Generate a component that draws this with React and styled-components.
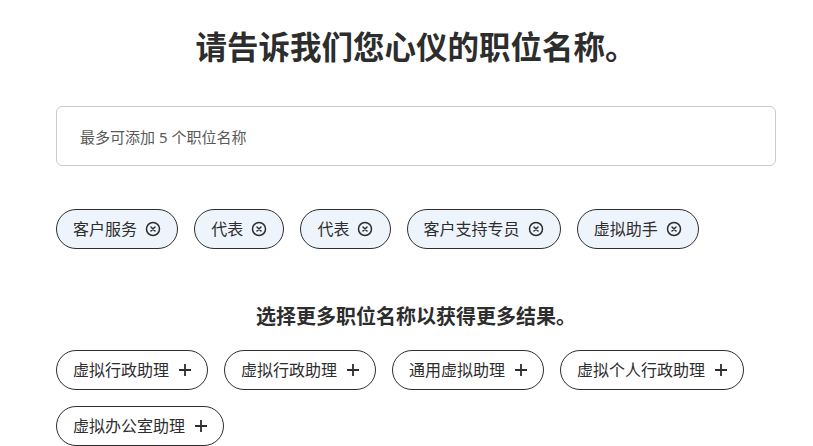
import React from 'react';
import styled, { createGlobalStyle } from 'styled-components';

const GlobalStyle = createGlobalStyle`
  html, body {
    margin: 0;
    padding: 0;
    background: #ffffff;
    overflow: hidden;
  }
  body {
    font-family: "Noto Sans", "Noto Sans CJK SC", sans-serif;
    color: #2d2d2d;
  }
`;

const Page = styled.div`
  width: 720px;
  padding: 26px 0 0 56px;
  display: flex;
  flex-direction: column;
`;

const Title = styled.h1`
  margin: 0;
  font-size: 31.5px;
  line-height: 42px;
  font-weight: 700;
  text-align: center;
  color: #2d2d2d;
`;

const InputBox = styled.div`
  margin-top: 38px;
  height: 58px;
  border: 1px solid #cbcbcb;
  border-radius: 6px;
  display: flex;
  align-items: center;
  padding: 0 23px;
  font-size: 15px;
  color: #595959;
`;

const ChipRow = styled.div`
  display: flex;
  flex-wrap: wrap;
  gap: 16px;
  margin-top: ${p => p.$top}px;
`;

const Chip = styled.button`
  height: 40px;
  box-sizing: border-box;
  border: 1px solid #2d2d2d;
  border-radius: 20px;
  background: ${p => (p.$selected ? '#eef4fc' : '#ffffff')};
  padding: 0 ${p => (p.$selected ? 16.2 : 14)}px 0 16px;
  display: flex;
  align-items: center;
  gap: 8px;
  font-family: inherit;
  font-size: 16px;
  line-height: 1;
  color: #2d2d2d;
  cursor: pointer;
`;

const Subtitle = styled.h2`
  margin: 54px 0 0;
  font-size: 20px;
  line-height: 28px;
  font-weight: 700;
  text-align: center;
  color: #2d2d2d;
`;

const CloseIcon = () => (
  <svg width="16" height="16" viewBox="0 0 16 16" fill="none">
    <circle cx="8" cy="8" r="6.5" stroke="#2d2d2d" strokeWidth="1.5" />
    <path d="M6 6l4 4M10 6l-4 4" stroke="#2d2d2d" strokeWidth="1.5" strokeLinecap="round" />
  </svg>
);

const PlusIcon = () => (
  <svg width="16" height="16" viewBox="0 0 16 16" fill="none">
    <path d="M8 2v12M2 8h12" stroke="#2d2d2d" strokeWidth="1.8" />
  </svg>
);

const selected = ['客户服务', '代表', '代表', '客户支持专员', '虚拟助手'];
const suggested = ['虚拟行政助理', '虚拟行政助理', '通用虚拟助理', '虚拟个人行政助理', '虚拟办公室助理'];

export default function App() {
  return (
    <>
      <GlobalStyle />
      <Page>
        <Title>请告诉我们您心仪的职位名称。</Title>
        <InputBox>最多可添加 5 个职位名称</InputBox>
        <ChipRow $top={43}>
          {selected.map((t, i) => (
            <Chip key={i} $selected>
              {t}
              <CloseIcon />
            </Chip>
          ))}
        </ChipRow>
        <Subtitle>选择更多职位名称以获得更多结果。</Subtitle>
        <ChipRow $top={19}>
          {suggested.map((t, i) => (
            <Chip key={i}>
              {t}
              <PlusIcon />
            </Chip>
          ))}
        </ChipRow>
      </Page>
    </>
  );
}
